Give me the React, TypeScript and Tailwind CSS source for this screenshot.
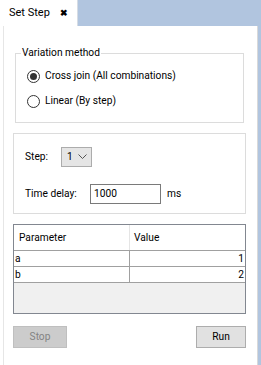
export default function App() {
  return (
    <div
      className="w-[261px] h-[365px] bg-[#b1c5df] flex flex-col text-[10.2px] text-black overflow-hidden"
      style={{ fontFamily: 'Roboto, "Noto Sans", sans-serif' }}
    >
      {/* tab strip */}
      <div className="h-[26px] flex shrink-0">
        <div className="w-[78px] h-[26px] bg-white border-r border-[#d6dce4] flex items-center pl-[9px] gap-[10px]">
          <span className="text-[11px]">Set Step</span>
          <span className="text-[9px] font-bold leading-none">✖</span>
        </div>
      </div>

      {/* panel */}
      <div className="flex-1 flex mr-[3px] bg-white pl-[3px]">
        <div className="flex-1 border-l border-[#e6e6e6] border-r border-r-[#d9d9d9] pl-[9px] pr-[11px] pt-[21px] flex flex-col">
          {/* variation method group */}
          <fieldset className="border border-[#dcdcdc] mx-[2px] px-[11px] pb-[10px] h-[77px] -mt-[1px]">
            <legend className="px-[1px] ml-[-6px] leading-[14px]">Variation method</legend>
            <div className="flex flex-col gap-[11px] pt-[9px]">
              <label className="flex items-center gap-[5px] h-[14px]">
                <span className="w-[13px] h-[13px] rounded-full border border-[#333] flex items-center justify-center">
                  <span className="w-[7px] h-[7px] rounded-full bg-[#333]" />
                </span>
                <span>Cross join (All combinations)</span>
              </label>
              <label className="flex items-center gap-[5px] h-[14px]">
                <span className="w-[13px] h-[13px] rounded-full border border-[#333]" />
                <span>Linear (By step)</span>
              </label>
            </div>
          </fieldset>

          {/* step / delay */}
          <div className="mt-[10px] border border-[#dcdcdc] h-[81px] px-[11px] pt-[13px] flex flex-col">
            <div className="flex items-center h-[20px]">
              <span className="w-[36px]">Step:</span>
              <div className="w-[31px] h-[20px] border border-[#acacac] bg-[#e5e5e5] flex items-center pl-[5px] gap-[5px]">
                <span>1</span>
                <svg width="9" height="6" viewBox="0 0 9 6" fill="none" stroke="#555" strokeWidth="1">
                  <path d="M0.5 0.5 L4.5 4.5 L8.5 0.5" />
                </svg>
              </div>
            </div>
            <div className="flex items-center h-[20px] mt-[17px]">
              <span className="w-[65px]">Time delay:</span>
              <div className="w-[71px] h-[20px] border border-[#7a7a7a] flex items-center pl-[3px]">1000</div>
              <span className="ml-[6px]">ms</span>
            </div>
          </div>

          {/* table */}
          <div className="mt-[10px] h-[90px] border border-[#828790] bg-[#f0f0f0] flex flex-col">
            <div className="flex h-[25px] bg-white">
              <div className="w-[116px] border-r border-[#e5e5e5] flex items-center pl-[5px]">Parameter</div>
              <div className="flex-1 flex items-center pl-[4px]">Value</div>
            </div>
            {[
              ["a", "1"],
              ["b", "2"],
            ].map(([k, v]) => (
              <div key={k} className="flex h-[16px] bg-white border-t border-[#a0a0a0] leading-[15px]">
                <div className="w-[116px] border-r border-[#a0a0a0] pl-[1px]">{k}</div>
                <div className="flex-1 text-right pr-[1px]">{v}</div>
              </div>
            ))}
            <div className="border-t border-[#a0a0a0]" />
          </div>

          {/* buttons */}
          <div className="flex justify-between mt-[12px]">
            <button className="w-[54px] h-[22px] bg-[#cccccc] border border-[#bfbfbf] text-[#838383]">Stop</button>
            <button className="w-[50px] h-[22px] bg-[#e1e1e1] border border-[#adadad]">Run</button>
          </div>
        </div>
      </div>
    </div>
  );
}
